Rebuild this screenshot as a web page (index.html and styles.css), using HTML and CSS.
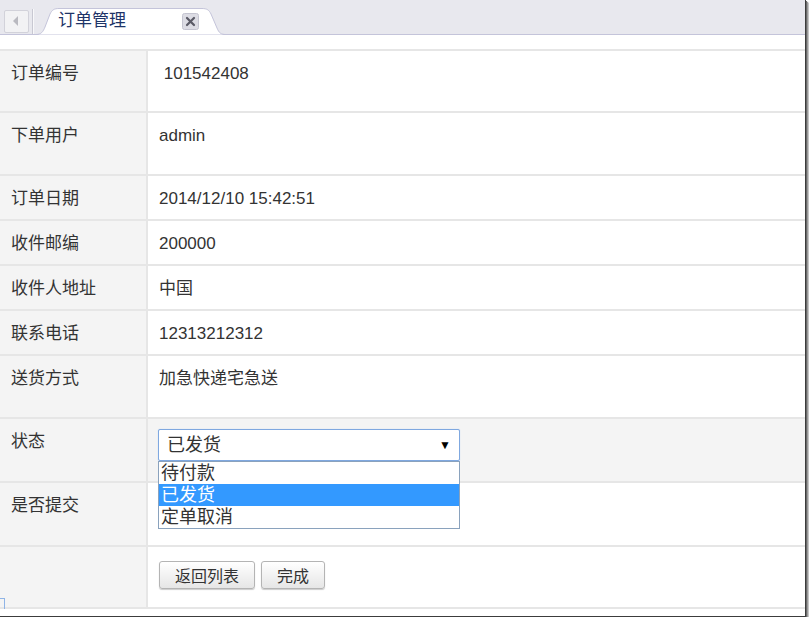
FILE: index.html
```html
<!DOCTYPE html>
<html>
<head>
<meta charset="utf-8">
<link rel="stylesheet" href="styles.css">
</head>
<body>
<div class="frame">
  <div class="tabbar">
    <div class="navbtn">
      <svg width="24" height="22" viewBox="0 0 24 22"><path d="M14 6 L9 11 L14 16 Z" fill="#b9b9c0"/></svg>
    </div>
    <div class="sep"></div>
    <div class="tab">
      <svg class="tabshape" width="190" height="35" viewBox="0 0 190 35">
        <path d="M0 34.5 C5 34.5 7 32 9 27 L14 14 C16 10 18 8.5 23 8.5 L166 8.5 C171 8.5 173 10 175 14 L181 28 C183 33 185 34.5 190 34.5" fill="#ffffff" stroke="#c4c4da" stroke-width="1"/>
      </svg>
      <span class="tabtitle">订单管理</span>
      <span class="close">
        <svg width="17" height="17" viewBox="0 0 17 17"><rect x="0.5" y="0.5" width="16" height="16" rx="2" fill="#dcdce4" stroke="#c4c4d0"/><path d="M5 5 L12 12 M12 5 L5 12" stroke="#5a5a66" stroke-width="2.2" stroke-linecap="round"/></svg>
      </span>
    </div>
  </div>

  <div class="form">
    <div class="row h62"><div class="label">订单编号</div><div class="value">&nbsp;101542408</div></div>
    <div class="row h63"><div class="label">下单用户</div><div class="value">admin</div></div>
    <div class="row h45"><div class="label">订单日期</div><div class="value">2014/12/10 15:42:51</div></div>
    <div class="row h45"><div class="label">收件邮编</div><div class="value">200000</div></div>
    <div class="row h45"><div class="label">收件人地址</div><div class="value">中国</div></div>
    <div class="row h45"><div class="label">联系电话</div><div class="value">12313212312</div></div>
    <div class="row h63"><div class="label">送货方式</div><div class="value">加急快递宅急送</div></div>
    <div class="row h64 grey">
      <div class="label">状态</div>
      <div class="value selcell">
        <div class="select">
          <span class="seltext">已发货</span>
          <span class="arrow">▼</span>
          <div class="options">
            <div class="opt">待付款</div>
            <div class="opt on">已发货</div>
            <div class="opt">定单取消</div>
          </div>
        </div>
      </div>
    </div>
    <div class="row h64"><div class="label">是否提交</div><div class="value"></div></div>
    <div class="row last">
      <div class="label"></div>
      <div class="value btncell">
        <button class="btn">返回列表</button>
        <button class="btn">完成</button>
      </div>
    </div>
  </div>
  <div class="corner"></div>
</div>
</body>
</html>
```

FILE: styles.css
```css
html, body {
  margin: 0;
  padding: 0;
  background: #ffffff;
}
body {
  font-family: "Liberation Sans", "Noto Sans CJK SC", sans-serif;
  color: #333333;
}
.frame {
  position: relative;
  width: 805px;
  height: 616px;
  background: #ffffff;
  border-right: 1px solid #3c3c3c;
  border-bottom: 1px solid #3c3c3c;
  box-shadow: 1px 1px 0 #6a6a6a, 2px 2px 1px #9a9a9a, 3px 3px 1px #cfcfcf;
  overflow: hidden;
}
.tabbar {
  height: 34px;
  background: #e8e8ee;
  border-bottom: 1px solid #c4c4da;
  display: flex;
  align-items: flex-start;
}
.navbtn {
  margin: 10px 0 0 4px;
  width: 23px;
  height: 21px;
  border: 1px solid #d2d2da;
  border-radius: 2px;
  background: #f2f2f4;
  display: flex;
  overflow: hidden;
}
.navbtn svg { margin-left: -1px; margin-top: -1px; }
.sep {
  margin: 9px 0 0 3px;
  width: 1px;
  height: 25px;
  background: #c8c8d2;
  border-right: 1px solid #f8f8fa;
}
.tab {
  position: relative;
  margin-left: 2px;
  width: 190px;
  height: 35px;
  display: flex;
  align-items: flex-start;
}
.tabshape {
  position: absolute;
  left: 0;
  top: 0;
}
.tabshape + .tabtitle { }
.tabtitle {
  position: relative;
  margin: 10px 0 0 22px;
  font-size: 17px;
  line-height: 22px;
  color: #1e3468;
}
.close {
  position: relative;
  margin: 13px 0 0 56px;
  width: 17px;
  height: 17px;
  display: flex;
}
.form {
  margin-top: 14px;
}
.row {
  display: grid;
  grid-template-columns: 148px 1fr;
  border-top: 2px solid #e6e6e6;
  box-sizing: border-box;
}
.row.last {
  height: 64px;
  border-bottom: 2px solid #e6e6e6;
}
.h62 { height: 62px; }
.h63 { height: 63px; }
.h45 { height: 45px; }
.h64 { height: 64px; }
.label {
  background: #f4f4f4;
  border-right: 2px solid #e6e6e6;
  padding: 13px 0 0 11px;
  font-size: 17px;
  line-height: 20px;
  color: #333333;
}
.value {
  padding: 13px 0 0 11px;
  font-size: 17px;
  line-height: 20px;
  color: #333333;
}
.grey .value { background: #f4f4f4; }
.selcell { padding: 10px 0 0 10px; }
.select {
  position: relative;
  width: 300px;
  height: 30px;
  border: 1px solid #7fa8e0;
  border-radius: 2px;
  background: #ffffff;
  display: flex;
  align-items: center;
  justify-content: space-between;
  box-shadow: 0 0 1px #a9c6ee;
}
.seltext {
  padding-left: 8px;
  font-size: 18px;
  color: #333333;
}
.arrow {
  font-size: 12px;
  color: #000000;
  padding-right: 8px;
}
.options {
  position: absolute;
  left: -1px;
  top: 31px;
  width: 300px;
  border: 1px solid #8aa2bd;
  background: #ffffff;
  z-index: 5;
}
.opt {
  height: 22px;
  line-height: 22px;
  padding-left: 2px;
  font-size: 18px;
  color: #333333;
}
.opt.on {
  background: #3399ff;
  color: #ffffff;
}
.btncell {
  padding: 14px 0 0 11px;
  display: flex;
  gap: 6px;
  align-items: flex-start;
}
.btn {
  height: 28px;
  padding: 0 15px;
  border: 1px solid #b4b4b4;
  border-radius: 3px;
  background: linear-gradient(#ffffff, #e6e6e6);
  font-family: "Liberation Sans", "Noto Sans CJK SC", sans-serif;
  font-size: 16px;
  color: #333333;
  box-shadow: 0 1px 1px #cccccc;
}
.corner {
  position: absolute;
  left: 0;
  top: 598px;
  width: 4px;
  height: 10px;
  border-top: 1px solid #8fb4e6;
  border-right: 1px solid #8fb4e6;
}
```
